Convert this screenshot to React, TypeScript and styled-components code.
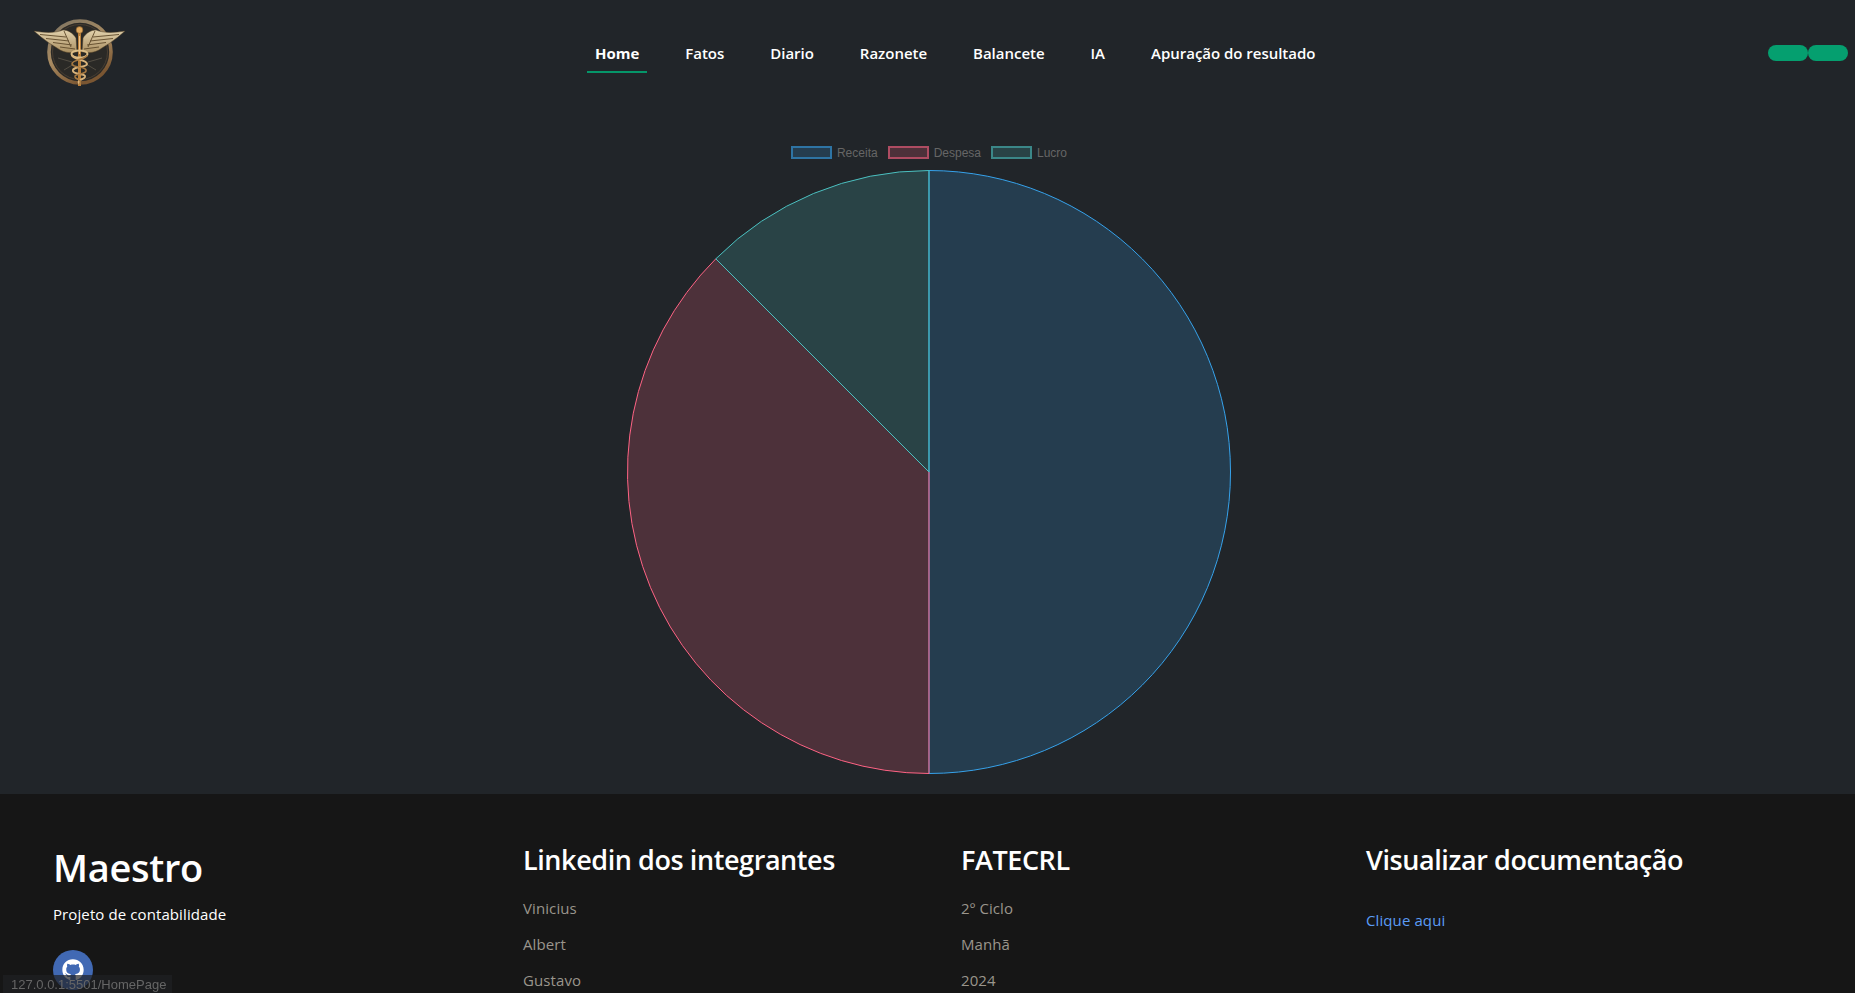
import React from 'react';
import styled, { createGlobalStyle } from 'styled-components';
import { FaGithub } from 'react-icons/fa';

const GlobalStyle = createGlobalStyle`
  html, body {
    margin: 0;
    padding: 0;
    height: 100%;
    overflow: hidden;
    background-color: #212529;
  }
  * {
    box-sizing: border-box;
  }
`;

const Page = styled.div`
  height: 100vh;
  overflow: hidden;
  font-family: "Open Sans", "Noto Sans", sans-serif;
  color: #fff;
`;

// Header
const Header = styled.header`
  height: 90px;
  display: grid;
  grid-template-columns: 557px auto 1fr;
  align-items: start;
  padding: 0 7px 0 30px;
`;

const LogoImage = styled.svg`
  width: 100px;
  height: 75px;
  display: block;
  margin-top: 15px;
`;

const Nav = styled.nav`
  display: flex;
  gap: 30px;
  margin-top: 37px;
`;

const NavLink = styled.a<{ $active?: boolean }>`
  height: 36px;
  padding: 5px 8px 0;
  font-size: 15px;
  font-weight: ${(p) => (p.$active ? 700 : 600)};
  line-height: 22px;
  letter-spacing: -0.02px;
  color: #fff;
  border-bottom: 2px solid ${(p) => (p.$active ? '#059669' : 'transparent')};
`;

const HeaderActions = styled.div`
  display: flex;
  justify-content: flex-end;
  margin-top: 45px;
`;

const PillButton = styled.button`
  width: 40px;
  height: 16px;
  padding: 0;
  border: none;
  border-radius: 8px;
  background-color: #059f6f;
`;

// Chart
const Main = styled.main`
  height: 704px;
  display: flex;
  flex-direction: column;
  align-items: center;
  padding-top: 56px;
`;

const Legend = styled.div`
  display: flex;
  align-items: center;
  height: 13px;
  gap: 10px;
  margin-bottom: 10px;
  margin-left: 3px;
  font-family: "Liberation Sans", Arial, sans-serif;
  font-size: 12px;
  color: #666;
`;

const LegendItem = styled.div`
  display: flex;
  align-items: center;
  gap: 5px;
`;

const LegendSwatch = styled.span<{ $r: number; $g: number; $b: number }>`
  width: 41px;
  height: 13px;
  background-color: rgba(${(p) => `${p.$r}, ${p.$g}, ${p.$b}`}, 0.2);
  border: 2px solid rgba(${(p) => `${p.$r}, ${p.$g}, ${p.$b}`}, 0.55);
`;

const PieChart = styled.svg`
  width: 606px;
  height: 606px;
  display: block;
  margin-left: 3px;
`;

// Footer
const Footer = styled.footer`
  height: 300px;
  background-color: #161616;
  padding: 49px 0 0 53px;
  display: grid;
  grid-template-columns: 470px 438px 405px 1fr;
  position: relative;
`;

const Brand = styled.h1`
  margin: 0;
  font-size: 38px;
  font-weight: 600;
  line-height: 48px;
  letter-spacing: -0.3px;
`;

const Tagline = styled.p`
  margin: 11px 0 0;
  font-size: 15px;
  line-height: 24px;
  letter-spacing: 0.1px;
`;

const GithubButton = styled.a`
  width: 40px;
  height: 40px;
  margin-top: 24px;
  border-radius: 50%;
  background-color: #4169b4;
  display: flex;
  align-items: center;
  justify-content: center;
  color: #fff;
  font-size: 22px;
`;

const ColumnTitle = styled.h4`
  margin: 0;
  font-size: 27px;
  font-weight: 600;
  line-height: 34px;
  letter-spacing: -0.42px;
`;

const LinkList = styled.ul`
  list-style: none;
  margin: 19px 0 0;
  padding: 0;
  display: flex;
  flex-direction: column;
  gap: 12px;
`;

const ListItem = styled.li`
  font-size: 15px;
  line-height: 24px;
  letter-spacing: 0.1px;
  color: #9a958c;
`;

const DocLink = styled.a`
  display: block;
  margin-top: 31px;
  font-size: 15px;
  line-height: 24px;
  letter-spacing: 0.1px;
  color: #5b9cf5;
`;

const StatusBubble = styled.div`
  position: fixed;
  left: 3px;
  bottom: 0;
  height: 18px;
  padding: 0 6px 0 8px;
  background-color: rgba(32, 33, 36, 0.7);
  font-family: "Liberation Sans", Arial, sans-serif;
  font-size: 13px;
  line-height: 20px;
  color: #666;
`;

const Wing: React.FC<{ flip?: boolean }> = ({ flip }) => (
  <g transform={flip ? 'translate(159 0) scale(-1 1)' : undefined}>
    <path
      d="M34 31C45 33 56 33 63 30C68 30 73 33 76 38L77 52C70 54 62 52 57 48L49 43L41 37Z"
      fill="url(#wingGold)"
      stroke="#4f3d22"
      strokeWidth="0.5"
    />
    <path
      d="M40 34.5L66 37M46 38.5L69 41M53 42.5L72 45M60 47L75 49M64 31L71 47"
      fill="none"
      stroke="#5f4a2a"
      strokeWidth="0.9"
    />
  </g>
);

const Logo: React.FC = () => (
  <LogoImage viewBox="30 15 100 75">
    <defs>
      <linearGradient id="wingGold" x1="0" y1="0" x2="0" y2="1">
        <stop offset="0" stopColor="#e3d3ae" />
        <stop offset="1" stopColor="#a98e60" />
      </linearGradient>
      <linearGradient id="ringGold" x1="0" y1="0" x2="0.5" y2="1">
        <stop offset="0" stopColor="#7c7362" />
        <stop offset="0.55" stopColor="#a98b61" />
        <stop offset="1" stopColor="#7a5632" />
      </linearGradient>
    </defs>
    <circle cx="80" cy="52" r="31" fill="#2a2926" stroke="url(#ringGold)" strokeWidth="3.6" />
    <circle cx="80" cy="52" r="27.5" fill="none" stroke="#4f4335" strokeWidth="0.8" />
    <path d="M58 58L72 62M102 58L88 62M64 70L74 64M96 70L86 64" stroke="#6d6556" strokeWidth="0.6" />
    <Wing />
    <Wing flip />
    <path d="M79.5 30V86" stroke="#b97f3a" strokeWidth="3" />
    <path d="M79.5 36V54" stroke="#efc48a" strokeWidth="1" />
    <circle cx="79.5" cy="30" r="3.4" fill="#e0a95e" stroke="#7c5222" strokeWidth="0.6" />
    <ellipse cx="79.5" cy="54" rx="8" ry="3.6" fill="none" stroke="#dcbd86" strokeWidth="2" />
    <path
      d="M72 55C72 60 87 59 87 64C87 68 72 66 73 71C74 75 86 73 85 77C84 80 76 79 79.5 84"
      fill="none"
      stroke="#d9b47c"
      strokeWidth="2"
    />
    <path
      d="M87 55C87 60 72 59 72 64C72 68 87 66 86 71C85 75 74 73 75 77C76 80 83 79 79.5 84"
      fill="none"
      stroke="#a87a42"
      strokeWidth="1.6"
    />
  </LogoImage>
);

const links = ['Fatos', 'Diario', 'Razonete', 'Balancete', 'IA', 'Apuração do resultado'];

// polar point around the center of the pie, angle in degrees from 12 o'clock
const point = (deg: number) => {
  const rad = (deg * Math.PI) / 180;
  return `${303 + 301.5 * Math.sin(rad)} ${303 - 301.5 * Math.cos(rad)}`;
};

const slices = [
  { from: 0, to: 180, color: '54, 162, 235' },
  { from: 180, to: 315, color: '255, 99, 132' },
  { from: 315, to: 360, color: '75, 192, 192' },
];

const legend = [
  { label: 'Receita', r: 54, g: 162, b: 235 },
  { label: 'Despesa', r: 255, g: 99, b: 132 },
  { label: 'Lucro', r: 75, g: 192, b: 192 },
];

const App: React.FC = () => (
  <Page>
    <GlobalStyle />
    <Header>
      <Logo />
      <Nav>
        <NavLink $active>Home</NavLink>
        {links.map((l) => (
          <NavLink key={l}>{l}</NavLink>
        ))}
      </Nav>
      <HeaderActions>
        <PillButton />
        <PillButton />
      </HeaderActions>
    </Header>

    <Main>
      <Legend>
        {legend.map((item) => (
          <LegendItem key={item.label}>
            <LegendSwatch $r={item.r} $g={item.g} $b={item.b} />
            {item.label}
          </LegendItem>
        ))}
      </Legend>
      <PieChart viewBox="0 0 606 606">
        {slices.map((s) => (
          <path
            key={s.from}
            d={`M303 303L${point(s.from)}A301.5 301.5 0 0 1 ${point(s.to)}Z`}
            fill={`rgba(${s.color}, 0.2)`}
            stroke={`rgb(${s.color})`}
            strokeWidth="1"
          />
        ))}
      </PieChart>
    </Main>

    <Footer>
      <div>
        <Brand>Maestro</Brand>
        <Tagline>Projeto de contabilidade</Tagline>
        <GithubButton>
          <FaGithub />
        </GithubButton>
      </div>
      <div>
        <ColumnTitle>Linkedin dos integrantes</ColumnTitle>
        <LinkList>
          <ListItem>Vinicius</ListItem>
          <ListItem>Albert</ListItem>
          <ListItem>Gustavo</ListItem>
        </LinkList>
      </div>
      <div>
        <ColumnTitle>FATECRL</ColumnTitle>
        <LinkList>
          <ListItem>2º Ciclo</ListItem>
          <ListItem>Manhã</ListItem>
          <ListItem>2024</ListItem>
        </LinkList>
      </div>
      <div>
        <ColumnTitle>Visualizar documentação</ColumnTitle>
        <DocLink>Clique aqui</DocLink>
      </div>
    </Footer>
    <StatusBubble>127.0.0.1:5501/HomePage</StatusBubble>
  </Page>
);

export default App;
